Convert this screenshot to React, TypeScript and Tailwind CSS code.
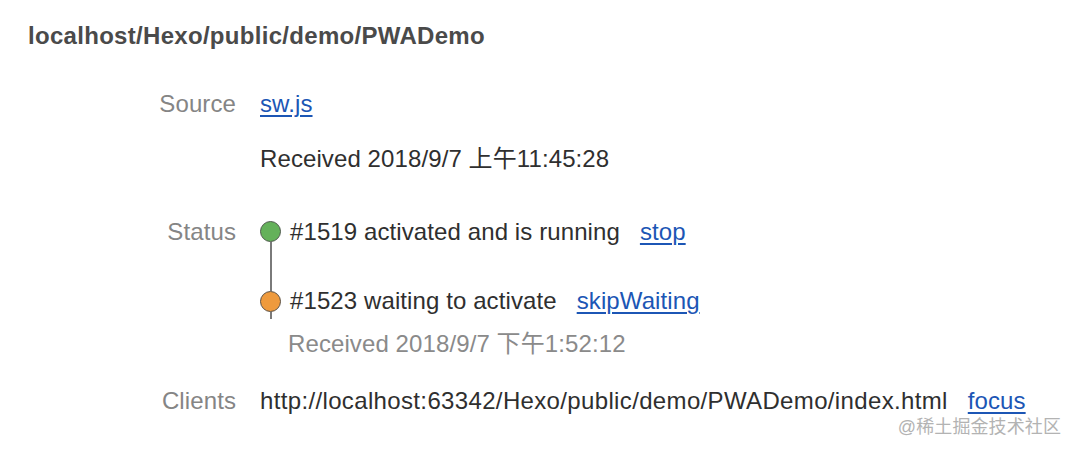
import React from "react";

const font = { fontFamily: '"Liberation Sans", Arial, "Noto Sans CJK SC", sans-serif' };

function Row({ label, className = "", children }: { label?: string; className?: string; children: React.ReactNode }) {
  return (
    <div className={`flex ${className}`}>
      <div className="w-[236px] shrink-0 text-right text-[#858585]">{label}</div>
      <div className="ml-6 flex-1">{children}</div>
    </div>
  );
}

function Link({ children }: { children: React.ReactNode }) {
  return <a className="text-[#1c56b5] underline underline-offset-[3px] decoration-[1.5px] cursor-pointer">{children}</a>;
}

export default function App() {
  return (
    <div className="relative w-[1076px] h-[452px] bg-white overflow-hidden text-[24px] leading-[28px] tracking-[0.1px] text-[#2f2f2f]" style={font}>
      <div className="pt-[22px] pl-[28px] font-bold tracking-[0.3px] text-[#4a4a4a]">localhost/Hexo/public/demo/PWADemo</div>

      <Row label="Source" className="mt-[40px]">
        <Link>sw.js</Link>
      </Row>

      <Row className="mt-[27px]">Received 2018/9/7 上午11:45:28</Row>

      <Row label="Status" className="mt-[45px]">
        <div className="flex">
          <div className="flex flex-col items-center w-[21px] shrink-0">
            <div className="mt-[3px] shrink-0 w-[21px] h-[21px] rounded-full bg-[#64b15a] border-[1.5px] border-[#4f5a4d]" />
            <div className="flex-1 w-[2px] bg-[#7a7a7a]" />
          </div>
          <div className="ml-[9px] pb-[41px]">
            #1519 activated and is running<span className="ml-5"><Link>stop</Link></span>
          </div>
        </div>
        <div className="flex h-[28px]">
          <div className="flex flex-col items-center w-[21px] shrink-0">
            <div className="shrink-0 w-[2px] h-[4px] bg-[#7a7a7a]" />
            <div className="shrink-0 w-[21px] h-[21px] rounded-full bg-[#ee9a3d] border-[1.5px] border-[#5a5045]" />
            <div className="shrink-0 w-[2px] h-[7px] bg-[#7a7a7a]" />
          </div>
          <div className="ml-[9px]">
            #1523 waiting to activate<span className="ml-5"><Link>skipWaiting</Link></span>
          </div>
        </div>
        <div className="mt-[15px] ml-[28px] text-[#8a8a8a]">Received 2018/9/7 下午1:52:12</div>
      </Row>

      <Row label="Clients" className="mt-[29px]">
        <span className="tracking-[0.35px]">http://localhost:63342/Hexo/public/demo/PWADemo/index.html</span>
        <span className="ml-5"><Link>focus</Link></span>
      </Row>

      <div className="absolute right-[15px] top-[416px] text-[18px] leading-[22px] text-[#b3b3b3]">@稀土掘金技术社区</div>
    </div>
  );
}
